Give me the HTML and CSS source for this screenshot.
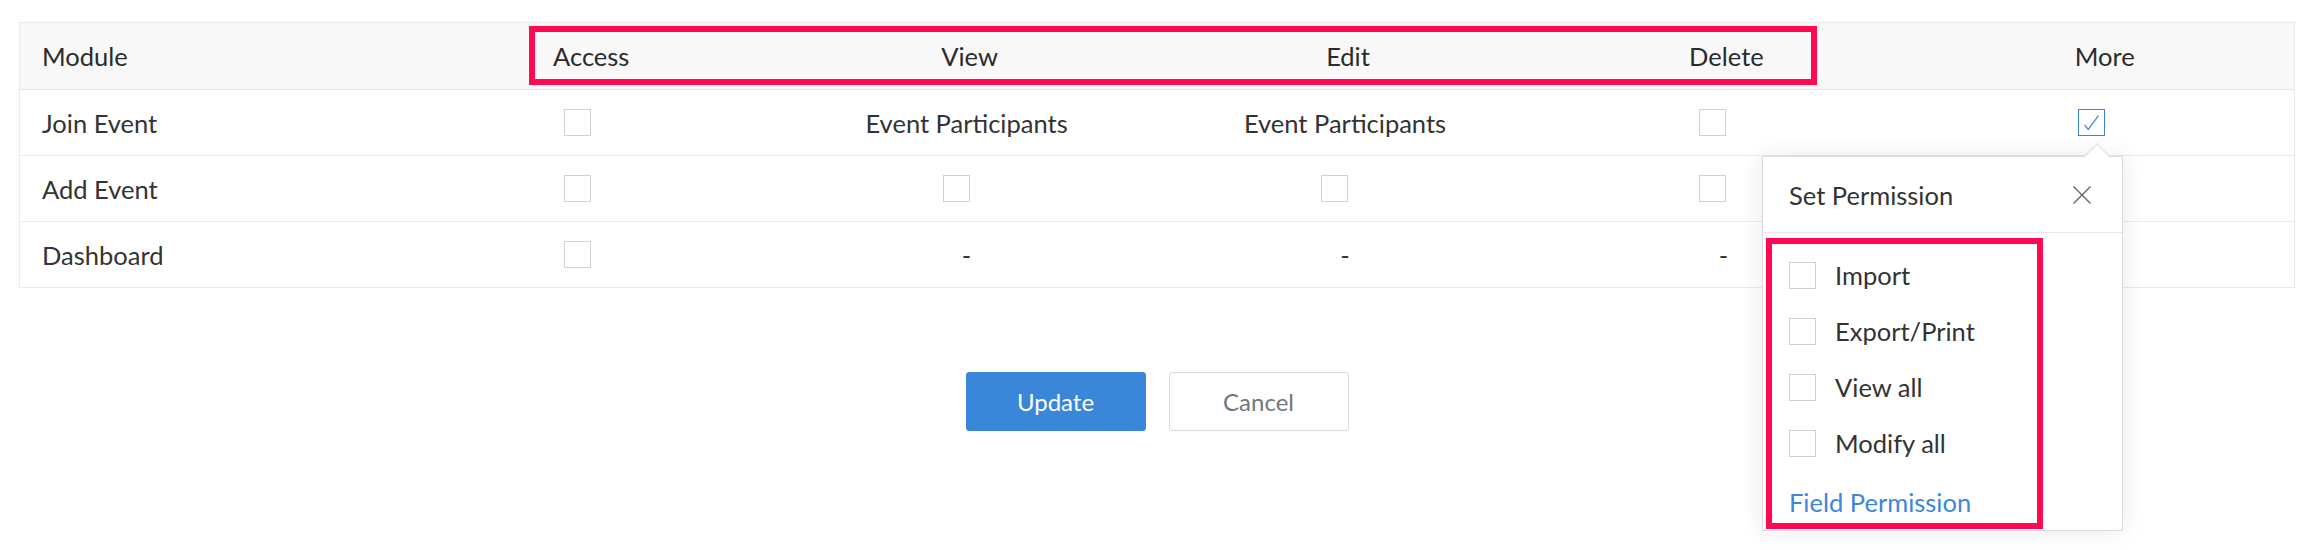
FILE: index.html
```html
<!DOCTYPE html>
<html>
<head>
<meta charset="utf-8">
<link rel="stylesheet" href="styles.css">
</head>
<body>
<div class="page">
  <div class="table-wrap">
    <div class="table">
      <div class="row head">
        <div class="cell first">Module</div>
        <div class="cell">Access</div>
        <div class="cell">View</div>
        <div class="cell">Edit</div>
        <div class="cell">Delete</div>
        <div class="cell">More</div>
      </div>
      <div class="row">
        <div class="cell first">Join Event</div>
        <div class="cell"><span class="cb-wrap"><span class="cb"></span></span></div>
        <div class="cell"><span class="txt">Event Participants</span></div>
        <div class="cell"><span class="txt">Event Participants</span></div>
        <div class="cell"><span class="cb-wrap"><span class="cb"></span></span></div>
        <div class="cell"><span class="cb-wrap"><span class="cb checked"><svg viewBox="0 0 27 27" width="25" height="25"><path d="M6 16 L10 21 L21 6" fill="none" stroke="#3a87d8" stroke-width="1.3"/></svg></span></span></div>
      </div>
      <div class="row">
        <div class="cell first">Add Event</div>
        <div class="cell"><span class="cb-wrap"><span class="cb"></span></span></div>
        <div class="cell"><span class="cb-wrap"><span class="cb"></span></span></div>
        <div class="cell"><span class="cb-wrap"><span class="cb"></span></span></div>
        <div class="cell"><span class="cb-wrap"><span class="cb"></span></span></div>
        <div class="cell"></div>
      </div>
      <div class="row">
        <div class="cell first">Dashboard</div>
        <div class="cell"><span class="cb-wrap"><span class="cb"></span></span></div>
        <div class="cell"><span class="txt">-</span></div>
        <div class="cell"><span class="txt">-</span></div>
        <div class="cell"><span class="txt">-</span></div>
        <div class="cell"></div>
      </div>
    </div>
    <div class="hl-head"></div>
    <div class="popup">
      <div class="arrow"></div>
      <div class="pop-head">
        <span class="pop-title">Set Permission</span>
        <svg class="close" viewBox="0 0 18 18" width="18" height="18"><path d="M0.5 0.5 L17.5 17.5 M17.5 0.5 L0.5 17.5" stroke="#666" stroke-width="1.4" fill="none"/></svg>
      </div>
      <div class="perm-list">
        <div class="perm"><span class="cb"></span><span class="perm-label">Import</span></div>
        <div class="perm"><span class="cb"></span><span class="perm-label">Export/Print</span></div>
        <div class="perm"><span class="cb"></span><span class="perm-label">View all</span></div>
        <div class="perm"><span class="cb"></span><span class="perm-label">Modify all</span></div>
        <div class="field-link">Field Permission</div>
      </div>
    </div>
  </div>
  <div class="actions">
    <button class="btn primary">Update</button>
    <button class="btn secondary">Cancel</button>
  </div>
</div>
</body>
</html>
```
FILE: styles.css
```css
* { box-sizing: border-box; }
html, body { margin: 0; padding: 0; background: #fff; }
body {
  font-family: Lato, "Open Sans", sans-serif;
  font-size: 25.5px;
  color: #333;
}
.page {
  padding: 22px 15px 0 19px;
  width: 2310px;
  min-height: 550px;
}
.table-wrap {
  position: relative;
  width: 2276px;
}
.table {
  border: 1px solid #ebebeb;
  border-bottom: none;
}
.row {
  display: grid;
  grid-template-columns: 382px repeat(5, 1fr);
  height: 66px;
  border-bottom: 1px solid #ebebeb;
}
.row.head {
  background: #f8f8f8;
  height: 67px;
  border-bottom: 1px solid #e6e6e6;
  color: #2b2b2b;
}
.cell {
  display: flex;
  align-items: center;
  justify-content: center;
}
.cell.first {
  justify-content: flex-start;
  padding-left: 22px;
}
.txt { margin-left: -6px; }
.cb-wrap {
  display: inline-flex;
  width: 52px;
  margin-left: -2px;
}
.cb {
  display: inline-flex;
  align-items: center;
  justify-content: center;
  width: 27px;
  height: 27px;
  border: 1px solid #cfd2d6;
  background: #fff;
  flex: none;
}
.cb.checked {
  border-color: #3a87d8;
}
.hl-head {
  position: absolute;
  left: 510px;
  top: 4px;
  width: 1288px;
  height: 59px;
  border: 6px solid #ff0a52;
}
.popup {
  position: absolute;
  left: 1743px;
  top: 134px;
  width: 361px;
  height: 375px;
  background: #fff;
  border: 1px solid #dcdcdc;
  box-shadow: 0 0 24px rgba(0, 0, 0, 0.09);
}
.arrow {
  position: absolute;
  left: 325px;
  top: -10px;
  width: 18px;
  height: 18px;
  background: #fff;
  border-top: 1px solid #dcdcdc;
  border-left: 1px solid #dcdcdc;
  transform: rotate(45deg);
}
.pop-head {
  height: 76px;
  display: flex;
  align-items: center;
  justify-content: space-between;
  padding: 0 31px 0 26px;
  border-bottom: 1px solid #e8e8e8;
  position: relative;
}
.pop-title { color: #333; }
.perm-list {
  margin: 5px 0 0 3px;
  width: 277px;
  height: 291px;
  border: 6px solid #ff0a52;
  padding: 3px 0 0 17px;
}
.perm {
  height: 56px;
  display: flex;
  align-items: center;
  gap: 19px;
}
.field-link {
  margin-top: 16px;
  line-height: 30px;
  color: #3a87d8;
}
.actions {
  width: 2276px;
  display: flex;
  justify-content: center;
  gap: 23px;
  margin-top: 84px;
}
.btn {
  width: 180px;
  height: 59px;
  border-radius: 3px;
  font-family: Lato, "Open Sans", sans-serif;
  font-size: 24px;
  cursor: pointer;
}
.btn.primary {
  background: #3a87d9;
  border: 1px solid #3a87d9;
  color: #fff;
}
.btn.secondary {
  background: #fff;
  border: 1px solid #dadada;
  color: #777;
}
```
